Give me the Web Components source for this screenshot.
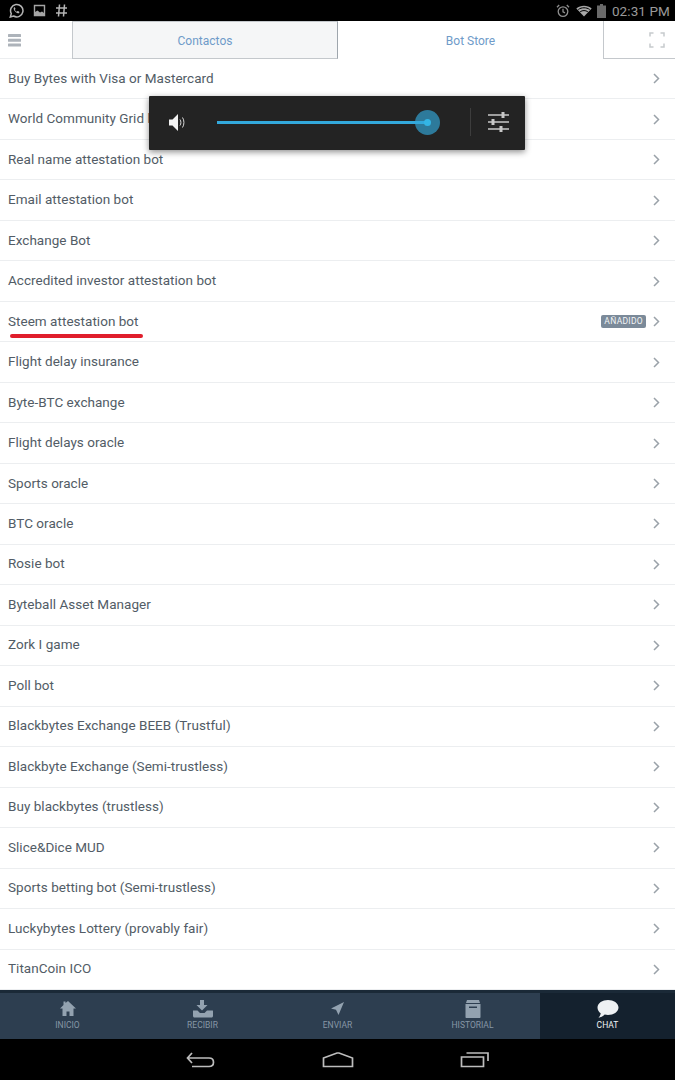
<!DOCTYPE html>
<html>
<head>
<meta charset="utf-8">
<title>Bot Store</title>
<style>
  html, body { margin: 0; height: 100%; background: #fff; }
  body { font-family: Roboto, "Liberation Sans", sans-serif; overflow: hidden; }
  app-shell { height: 1080px; }
</style>
</head>
<body>
<app-shell>
  <status-bar slot="status"></status-bar>
  <tab-bar slot="tabs"></tab-bar>
  <bot-list slot="list">
    <bot-row>Buy Bytes with Visa or Mastercard</bot-row>
    <bot-row>World Community Grid bot</bot-row>
    <bot-row>Real name attestation bot</bot-row>
    <bot-row>Email attestation bot</bot-row>
    <bot-row>Exchange Bot</bot-row>
    <bot-row>Accredited investor attestation bot</bot-row>
    <bot-row added underlined>Steem attestation bot</bot-row>
    <bot-row>Flight delay insurance</bot-row>
    <bot-row>Byte-BTC exchange</bot-row>
    <bot-row>Flight delays oracle</bot-row>
    <bot-row>Sports oracle</bot-row>
    <bot-row>BTC oracle</bot-row>
    <bot-row>Rosie bot</bot-row>
    <bot-row>Byteball Asset Manager</bot-row>
    <bot-row>Zork I game</bot-row>
    <bot-row>Poll bot</bot-row>
    <bot-row>Blackbytes Exchange BEEB (Trustful)</bot-row>
    <bot-row>Blackbyte Exchange (Semi-trustless)</bot-row>
    <bot-row>Buy blackbytes (trustless)</bot-row>
    <bot-row>Slice&amp;Dice MUD</bot-row>
    <bot-row>Sports betting bot (Semi-trustless)</bot-row>
    <bot-row>Luckybytes Lottery (provably fair)</bot-row>
    <bot-row>TitanCoin ICO</bot-row>
  </bot-list>
  <bottom-nav slot="bottom">
    <nav-item label="INICIO" icon="home"></nav-item>
    <nav-item label="RECIBIR" icon="receive"></nav-item>
    <nav-item label="ENVIAR" icon="send"></nav-item>
    <nav-item label="HISTORIAL" icon="history"></nav-item>
    <nav-item label="CHAT" icon="chat" active></nav-item>
  </bottom-nav>
  <system-nav slot="system"></system-nav>
  <volume-panel slot="overlay"></volume-panel>
</app-shell>

<script>
class AppShell extends HTMLElement {
  constructor() {
    super();
    this.attachShadow({ mode: 'open' });
    this.shadowRoot.innerHTML = `
    <style>
      :host { display: flex; flex-direction: column; position: relative; width: 675px; }
      .list { flex: 1; min-height: 0; display: flex; }
      ::slotted(bot-list) { flex: 1; }
    </style>
    <slot name="status"></slot>
    <slot name="tabs"></slot>
    <div class="list"><slot name="list"></slot></div>
    <slot name="bottom"></slot>
    <slot name="system"></slot>
    <slot name="overlay"></slot>
    `;
  }
}

class StatusBar extends HTMLElement {
  constructor() {
    super();
    this.attachShadow({ mode: 'open' });
    this.shadowRoot.innerHTML = `
    <style>
      :host { display: flex; align-items: center; height: 21px; background: #000; color: #9a9a9a;
        padding: 0 5px 0 9px; font-size: 13.5px; }
      .left { display: flex; align-items: center; gap: 9px; }
      .right { margin-left: auto; display: flex; align-items: center; gap: 4px; }
      svg { display: block; }
      span { letter-spacing: .1px; margin-left: 1px; }
    </style>
    <div class="left">
      <svg width="15" height="15" viewBox="0 0 15 15" fill="none" stroke="#b5b5b5" stroke-width="1.5">
        <path d="M1.3 14l1-3.4A6.2 6.2 0 1 1 4.6 13z"/>
        <path d="M5 4.4c-.9 1 0 3 1.400 4.300s3 2 4 1.200l-.3-1.300-1.600-.7-.8.8c-.8-.3-1.500-1-1.900-2l.7-.8-.6-1.600z" fill="#b5b5b5" stroke="none"/>
      </svg>
      <svg width="13" height="13" viewBox="0 0 13 13">
        <path d="M1.500 1.500h10v10h-10z" fill="none" stroke="#a5a5a5" stroke-width="1.400"/>
        <path d="M2 11V8l2.500-1.500L7 8.500l2-1 2 1.500v2z" fill="#a5a5a5"/>
      </svg>
      <svg width="13" height="15" viewBox="0 0 13 15" stroke="#b5b5b5" stroke-width="1.500" fill="none">
        <path d="M4.500 1.500l-1 12M9.500 1.500l-1 12M1 5h11M1 10h11"/>
      </svg>
    </div>
    <div class="right">
      <svg width="14" height="14" viewBox="0 0 14 14" fill="none" stroke="#8e8e8e" stroke-width="1.300" style="margin-right:2px">
        <circle cx="7" cy="7.600" r="4.800"/><path d="M7 4.800v3l2 1M1 3.200L3.200 1M13 3.200L10.800 1"/>
      </svg>
      <svg width="16" height="12" viewBox="0 0 16 12">
        <path d="M8 11.500L.3 3.500C4.500-.2 11.500-.2 15.700 3.500z" fill="#a8a8a8"/>
        <path d="M2.300 4.500c3.300-2.300 8.100-2.300 11.400 0M4.200 6.700c2.300-1.500 5.300-1.500 7.600 0" stroke="#000" fill="none"/>
      </svg>
      <svg width="9" height="14" viewBox="0 0 9 14" style="margin-left:1px;margin-right:1px">
        <path d="M3 0h3v1.500h3V14H0V1.500h3z" fill="#6a6a6a"/>
      </svg>
      <span>02:31 PM</span>
    </div>
    `;
  }
}

class TabBar extends HTMLElement {
  constructor() {
    super();
    this.attachShadow({ mode: 'open' });
    this.shadowRoot.innerHTML = `
    <style>
      :host { display: grid; grid-template-columns: 72px 266px 265px 72px; height: 38px; background: #fff;
        font-size: 12px; color: #6f9bc9; box-sizing: border-box; }
      div { display: flex; align-items: center; justify-content: center; box-sizing: border-box; }
      .menu { justify-content: flex-start; padding-left: 8px; border-bottom: 1px solid #eceef0; }
      .on { background: #f5f6f7; border: 1px solid #c4c8cc; border-right-color: #9fa6ad; padding-top: 1px; }
      .off { padding-top: 1px; }
      .full { border-left: 1px solid #c4c8cc; border-bottom: 1px solid #c4c8cc; padding-left: 35px; padding-top: 1px; }
    </style>
    <div class="menu">
      <svg width="14" height="14" viewBox="0 0 14 14" fill="#adb3ba">
        <rect y="1" width="13" height="3" rx=".5"/><rect y="5.800" width="13" height="3" rx=".5"/><rect y="10.500" width="13" height="3" rx=".5"/>
      </svg>
    </div>
    <div class="on">Contactos</div>
    <div class="off">Bot Store</div>
    <div class="full">
      <svg width="16" height="16" viewBox="0 0 16 16" fill="none" stroke="#c6cacd" stroke-width="1.500">
        <path d="M1 4.500V1h3.500M11.500 1H15v3.500M15 11.500V15h-3.500M4.500 15H1v-3.500"/>
      </svg>
    </div>
    `;
  }
}

class BotList extends HTMLElement {
  constructor() {
    super();
    this.attachShadow({ mode: 'open' });
    this.shadowRoot.innerHTML = `
    <style>
      :host { display: grid; grid-auto-rows: 1fr; background: #fff; }
    </style>
    <slot></slot>
    `;
  }
}

class BotRow extends HTMLElement {
  constructor() {
    super();
    this.attachShadow({ mode: 'open' });
    this.shadowRoot.innerHTML = `
    <style>
      :host { display: flex; align-items: center; position: relative; box-sizing: border-box; min-height: 0;
        padding: 0 15px 0 8px; border-bottom: 1px solid #eceef0; font-size: 13.500px; color: #525c66; }
      .name { flex: 1; letter-spacing: .03px; padding-bottom: 2px; }
      .badge { display: none; background: #7b8a99; color: #f2f4f6; font-size: 8.500px; line-height: 11px;
        padding: 1px 3px; border-radius: 2px; margin-right: 7px; letter-spacing: .3px; }
      :host([added]) .badge { display: block; }
      .line { display: none; position: absolute; left: 10px; width: 133px; bottom: 3px; height: 4px;
        border-radius: 2px; background: #e01e2c; }
      :host([underlined]) .line { display: block; }
      svg { display: block; }
    </style>
    <span class="name"><slot></slot></span>
    <span class="badge">AÑADIDO</span>
    <svg width="7" height="11" viewBox="0 0 7 11" fill="none" stroke="#9aa2a9" stroke-width="1.500">
      <path d="M1 1l4.500 4.500L1 10"/>
    </svg>
    <div class="line"></div>
    `;
  }
}

const NAV_ICONS = {
  home: '<path d="M9 1L17 8.500h-2.500V16h-4v-4.500h-3V16h-4V8.500H1L4.500 5V1.500h2V3z"/>',
  receive: '<path d="M7 0h4v5h3.500L9 10.500 3.500 5H7z"/><path d="M0 10.500h4.500l2.500 2.500h4.500l2.500-2.500h5.500c.5 0 .5.500.5 1V16c0 .8-.7 1.500-1.500 1.500h-17C.7 17.500 0 16.800 0 16z"/>',
  send: '<path d="M15 2L2 8.500l5 1.300L9.500 15z"/>',
  history: '<path d="M3 0h12l1 3H2z"/><path d="M1.500 4h15v13c0 .6-.4 1-1 1h-13c-.6 0-1-.4-1-1z"/><path d="M5 6.500h8v1.500H5z" fill="#2d3e50"/>',
  chat: '<path d="M12 0c5.500 0 10.500 3 10.500 7.500S17.500 15 12 15c-1.200 0-2.300-.1-3.300-.4C7 16.500 4.500 17.500 2.500 17.500c1.200-1 2-2.500 2.200-4.300C2.800 12 1.500 10 1.500 7.500 1.500 3 6.500 0 12 0z"/>'
};

class NavItem extends HTMLElement {
  constructor() {
    super();
    this.attachShadow({ mode: 'open' });
    this.shadowRoot.innerHTML = `
    <style>
      :host { display: flex; flex-direction: column; align-items: center; justify-content: flex-end;
        padding-bottom: 9px; gap: 2px; color: #8797a6; font-size: 8.500px; background: #2d3e50; }
      :host([active]) { background: #14212e; color: #f0f3f5; }
      svg { display: block; fill: #93a2b0; }
      :host([active]) svg { fill: #eef1f3; }
    </style>
    <svg></svg>
    <span></span>
    `;
  }

  connectedCallback() {
    const icon = this.getAttribute('icon');
    const svg = this.shadowRoot.querySelector('svg');
    const w = icon === 'chat' ? 24 : icon === 'receive' ? 20 : 18;
    svg.setAttribute('width', w);
    svg.setAttribute('height', 18);
    svg.setAttribute('viewBox', `0 0 ${w} 18`);
    svg.innerHTML = NAV_ICONS[icon];
    this.shadowRoot.querySelector('span').textContent = this.getAttribute('label');
  }
}

class BottomNav extends HTMLElement {
  constructor() {
    super();
    this.attachShadow({ mode: 'open' });
    this.shadowRoot.innerHTML = `
    <style>
      :host { display: grid; grid-template-columns: repeat(5, 135px); height: 49px; box-sizing: border-box;
        border-top: 3px solid #1a2937; background: #2d3e50; }
    </style>
    <slot></slot>
    `;
  }
}

class SystemNav extends HTMLElement {
  constructor() {
    super();
    this.attachShadow({ mode: 'open' });
    this.shadowRoot.innerHTML = `
    <style>
      :host { display: grid; grid-template-columns: 135px 135px 135px; justify-content: center; align-items: center;
        height: 41px; background: #000; }
      div { display: flex; justify-content: center; padding-top: 1px; }
      svg { display: block; fill: none; stroke: #bdbdbd; stroke-width: 1.700; }
    </style>
    <div>
      <svg width="30" height="16" viewBox="0 0 30 16" style="margin-left:-3px">
        <path d="M6 1L1.500 6 6 11M1.500 6H23c2.800 0 4.500 1.800 4.500 4.200S25.800 14.500 23 14.500H6"/>
      </svg>
    </div>
    <div>
      <svg width="32" height="16" viewBox="0 0 32 16">
        <path d="M1.500 6L15 1h2L30.500 6v8.500h-29z"/>
      </svg>
    </div>
    <div>
      <svg width="30" height="16" viewBox="0 0 30 16" style="margin-left:4px">
        <path d="M6.500 1H28v8"/><path d="M1.500 5h22v9.500h-22z"/>
      </svg>
    </div>
    `;
  }
}

class VolumePanel extends HTMLElement {
  constructor() {
    super();
    this.attachShadow({ mode: 'open' });
    this.shadowRoot.innerHTML = `
    <style>
      :host { display: flex; align-items: center; position: absolute; left: 149px; top: 96px; width: 376px; height: 54px;
        box-sizing: border-box; background: #232323; box-shadow: 0 2px 6px rgba(0,0,0,.45); border-radius: 1px;
        padding: 0 15px 0 19px; }
      svg { display: block; flex: none; margin-bottom: 2px; }
      .track { flex: none; width: 211px; height: 3px; margin: 0 0 2px 30px; background: #33a9dc; position: relative; }
      .knob { position: absolute; right: -12px; top: -11px; width: 25px; height: 25px; border-radius: 50%;
        background: rgba(51,169,220,.65); }
      .knob::after { content: ""; position: absolute; left: 9px; top: 9px; width: 7px; height: 7px; border-radius: 50%;
        background: #33b5e5; }
      .sep { width: 1px; height: 28px; background: #3d3d3d; margin: 0 0 2px 42px; }
      .cfg { margin-left: 17px; }
    </style>
    <svg width="19" height="19" viewBox="0 0 19 19">
      <path d="M1 6.500h3.500L10 1v17l-5.500-5.500H1z" fill="#f2f2f2"/>
      <path d="M12 6.500c1.200 1.500 1.200 4.500 0 6M14.500 4.500c1.900 2.800 1.900 7.200 0 10" fill="none" stroke="#d8d8d8" stroke-width="1"/>
    </svg>
    <div class="track"><div class="knob"></div></div>
    <div class="sep"></div>
    <svg class="cfg" width="21" height="20" viewBox="0 0 21 20" stroke="#c8c8c8" stroke-width="1.300" fill="none">
      <path d="M0 3h21M0 10h21M0 17h21"/>
      <path d="M15 0v6M5 7v6M13 14v6" stroke-width="3"/>
    </svg>
    `;
  }
}

customElements.define('app-shell', AppShell);
customElements.define('status-bar', StatusBar);
customElements.define('tab-bar', TabBar);
customElements.define('bot-list', BotList);
customElements.define('bot-row', BotRow);
customElements.define('nav-item', NavItem);
customElements.define('bottom-nav', BottomNav);
customElements.define('system-nav', SystemNav);
customElements.define('volume-panel', VolumePanel);
</script>
</body>
</html>
